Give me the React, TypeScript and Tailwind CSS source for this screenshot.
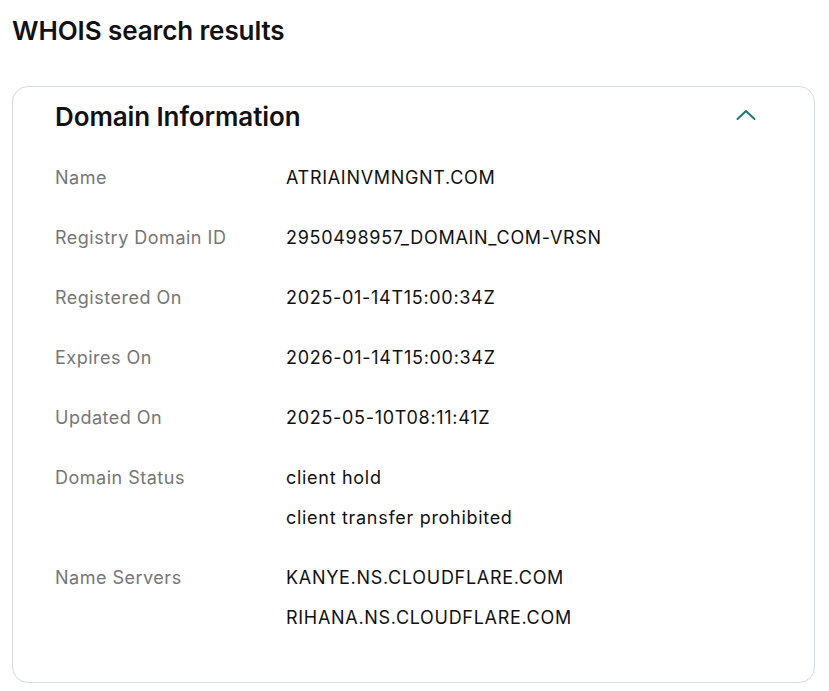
const rows: { label: string; values: string[] }[] = [
  { label: "Name", values: ["ATRIAINVMNGNT.COM"] },
  { label: "Registry Domain ID", values: ["2950498957_DOMAIN_COM-VRSN"] },
  { label: "Registered On", values: ["2025-01-14T15:00:34Z"] },
  { label: "Expires On", values: ["2026-01-14T15:00:34Z"] },
  { label: "Updated On", values: ["2025-05-10T08:11:41Z"] },
  { label: "Domain Status", values: ["client hold", "client transfer prohibited"] },
  { label: "Name Servers", values: ["KANYE.NS.CLOUDFLARE.COM", "RIHANA.NS.CLOUDFLARE.COM"] },
];

export default function App() {
  return (
    <div className="min-h-screen bg-white px-3 pt-[15px] font-['Inter','Noto_Sans',sans-serif] text-[#111]">
      <h1 className="text-[26px] leading-8 font-semibold tracking-[-0.1px]">WHOIS search results</h1>

      {/* Card */}
      <div className="mt-[39px] w-[803px] rounded-2xl border border-[#d4dbe0] pb-[44px] pl-[42px] pr-[58px] pt-3">
        <div className="flex items-center justify-between">
          <h2 className="text-[26px] leading-9 font-semibold tracking-[-0.1px]">Domain Information</h2>
          <svg width="20" height="12" viewBox="0 0 20 12" fill="none" className="-mt-1 text-[#1c7a7c]">
            <path d="M1.5 10 L10 2 L18.5 10" stroke="currentColor" strokeWidth="2" strokeLinecap="round" strokeLinejoin="round" />
          </svg>
        </div>

        <div className="mt-[23px] flex flex-col gap-5">
          {rows.map((row) => (
            <div key={row.label} className="flex text-[18px]">
              <div className="w-[231px] shrink-0 leading-10 tracking-[0.5px] text-[#767676]">{row.label}</div>
              <div className="flex flex-col tracking-[0.7px]">
                {row.values.map((v) => (
                  <div key={v} className="leading-10">{v}</div>
                ))}
              </div>
            </div>
          ))}
        </div>
      </div>
    </div>
  );
}
